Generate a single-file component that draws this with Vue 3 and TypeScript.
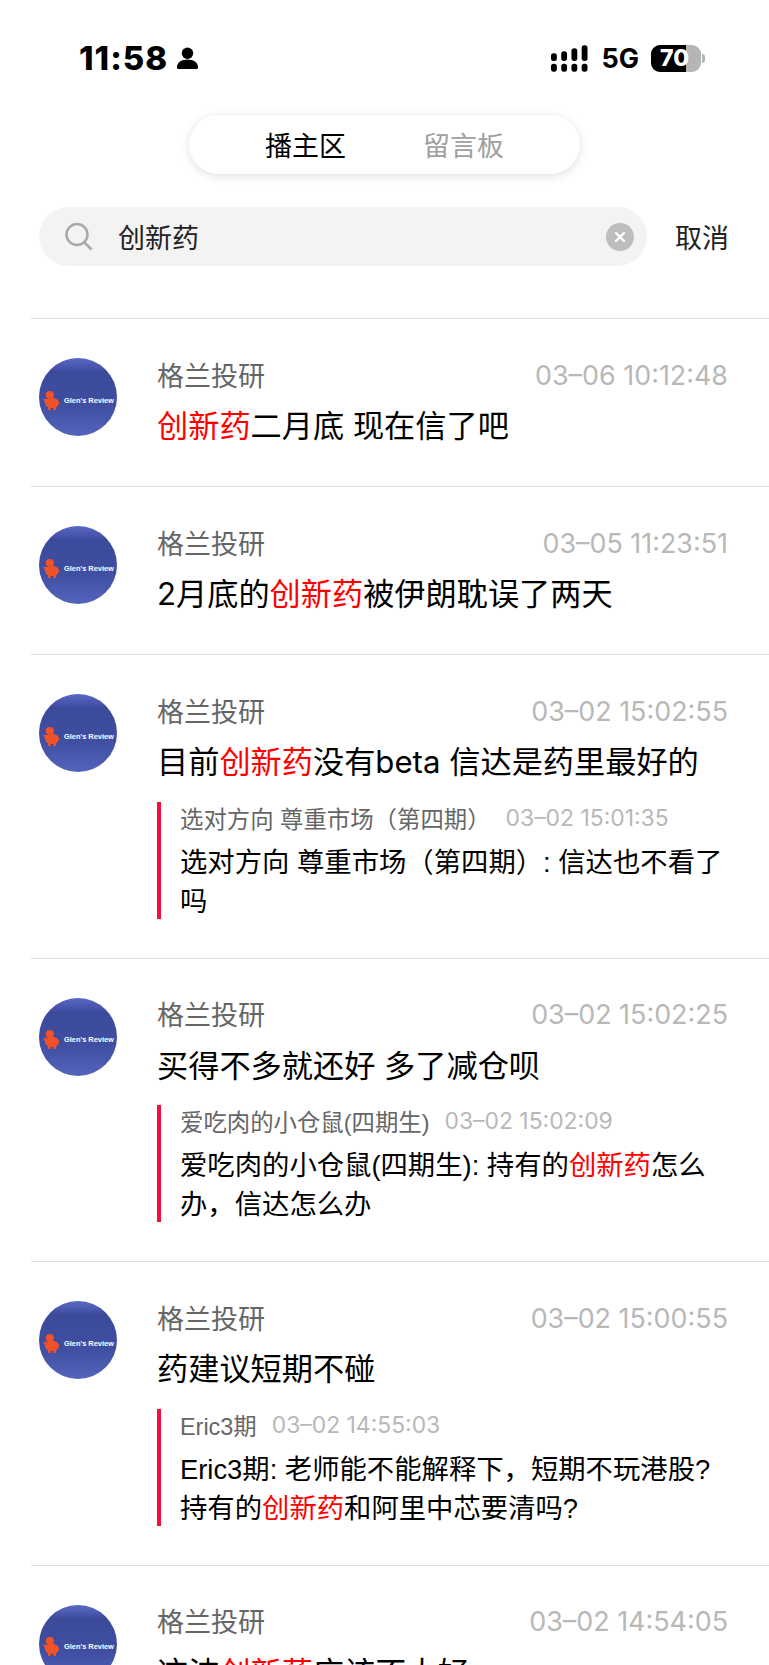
<template>
  <div class="page">
    <div class="status-bar">
      <div class="status-left">
        <span class="clock">11:58</span>
        <svg class="person" viewBox="0 0 24 24" width="23" height="24">
          <circle cx="12" cy="7" r="6" />
          <path d="M1 22c0-5.600 4.600-8.500 11-8.500s11 2.900 11 8.500c0 1-.5 1.500-1.300 1.500H2.300C1.500 23.500 1 23 1 22z" />
        </svg>
      </div>
      <div class="status-right">
        <svg class="signal" viewBox="0 0 38 27" width="37" height="27">
          <rect x="0" y="8" width="6" height="8" rx="2.600" />
          <rect x="0" y="19" width="6" height="8" rx="2.600" />
          <rect x="10.500" y="6" width="6" height="10" rx="2.800" />
          <rect x="10.500" y="19" width="6" height="8" rx="2.600" />
          <rect x="21" y="3" width="6" height="13" rx="2.800" />
          <rect x="21" y="19" width="6" height="8" rx="2.600" />
          <rect x="31.500" y="0" width="6" height="16" rx="2.800" />
          <rect x="31.500" y="19" width="6" height="8" rx="2.600" />
        </svg>
        <span class="network">5G</span>
        <div class="battery">
          <div class="battery-body">
            <div class="battery-level"></div>
            <span class="battery-text">70</span>
          </div>
          <div class="battery-tip"></div>
        </div>
      </div>
    </div>

    <div class="tabs-wrap">
      <div class="tabs">
        <span class="tab active">播主区</span>
        <span class="tab">留言板</span>
      </div>
    </div>

    <div class="search-row">
      <div class="search-box">
        <svg class="search-icon" viewBox="0 0 30 30" width="30" height="30" fill="none">
          <circle cx="13" cy="12.500" r="10.500" />
          <path d="M20.500 20.500 27.500 27.500" />
        </svg>
        <span class="search-text">创新药</span>
        <span class="clear-btn">
          <svg viewBox="0 0 12 12" width="12" height="12" fill="none">
            <path d="M2 2l8 8M10 2l-8 8" />
          </svg>
        </span>
      </div>
      <span class="cancel">取消</span>
    </div>

    <div class="list">
      <div v-for="(post, i) in posts" :key="i" class="post">
        <div class="avatar">
          <svg class="pig" viewBox="0 0 18 20" width="17" height="19">
            <circle cx="7.200" cy="4.300" r="4.300" />
            <ellipse cx="9.500" cy="12.500" rx="7.500" ry="5.500" />
            <path d="M0 7.500l4.500 1.500-2 4zM5 15.500h3.200V20H5.600zM11 15.500h3.200l-.6 4.500H11.400z" />
          </svg>
          <span class="avatar-text">Glen's Review</span>
        </div>
        <div class="post-main">
          <div class="post-head">
            <span class="post-name">格兰投研</span>
            <span class="post-time">{{ post.time }}</span>
          </div>
          <p class="post-body">
            <span v-for="(part, j) in split(post.text)" :key="j" :class="{ hit: part === keyword }">{{ part }}</span>
          </p>
          <div v-if="post.reply" class="reply">
            <div class="reply-head">
              <span class="reply-name">{{ post.reply.name }}</span>
              <span class="reply-time">{{ post.reply.time }}</span>
            </div>
            <p class="reply-body">
              <span v-for="(part, j) in split(post.reply.text)" :key="j" :class="{ hit: part === keyword }">{{ part }}</span>
            </p>
          </div>
        </div>
      </div>
    </div>
  </div>
</template>

<script setup lang="ts">
interface Reply {
  name: string
  time: string
  text: string
}

interface Post {
  time: string
  text: string
  reply?: Reply
}

const keyword = '创新药'

const posts: Post[] = [
  { time: '03–06 10:12:48', text: '创新药二月底 现在信了吧' },
  { time: '03–05 11:23:51', text: '2月底的创新药被伊朗耽误了两天' },
  {
    time: '03–02 15:02:55',
    text: '目前创新药没有beta 信达是药里最好的',
    reply: {
      name: '选对方向 尊重市场（第四期）',
      time: '03–02 15:01:35',
      text: '选对方向 尊重市场（第四期）: 信达也不看了吗',
    },
  },
  {
    time: '03–02 15:02:25',
    text: '买得不多就还好 多了减仓呗',
    reply: {
      name: '爱吃肉的小仓鼠(四期生)',
      time: '03–02 15:02:09',
      text: '爱吃肉的小仓鼠(四期生): 持有的创新药怎么办，信达怎么办',
    },
  },
  {
    time: '03–02 15:00:55',
    text: '药建议短期不碰',
    reply: {
      name: 'Eric3期',
      time: '03–02 14:55:03',
      text: 'Eric3期: 老师能不能解释下，短期不玩港股?持有的创新药和阿里中芯要清吗?',
    },
  },
  { time: '03–02 14:54:05', text: '这波创新药应该不太好' },
]

function split(text: string): string[] {
  return text.split(new RegExp(`(${keyword})`)).filter(Boolean)
}
</script>

<style>
html,
body {
  margin: 0;
  background: #fff;
  overflow: hidden;
}
</style>

<style scoped>
.page {
  height: 1665px;
  overflow: hidden;
  background: #fff;
  font-family: "Liberation Sans", "Noto Sans CJK SC", sans-serif;
  color: #000;
}

.status-bar {
  height: 115px;
  box-sizing: border-box;
  padding: 41px 64px 0 79px;
  display: flex;
  justify-content: space-between;
  align-items: flex-start;
}

.status-left,
.status-right {
  display: flex;
  align-items: center;
  height: 34px;
}

.clock {
  font-family: "Inter", sans-serif;
  font-size: 33px;
  font-weight: 800;
  letter-spacing: 1px;
  line-height: 34px;
}

.person {
  margin-left: 8px;
}

.network {
  margin-left: 13px;
  font-family: "Inter", sans-serif;
  font-size: 27px;
  font-weight: 700;
}

.battery {
  margin-left: 12px;
  display: flex;
  align-items: center;
}

.battery-body {
  position: relative;
  width: 50px;
  height: 27px;
  border-radius: 9px;
  overflow: hidden;
  background: #b5b5b5;
}

.battery-level {
  width: 35px;
  height: 100%;
  background: #000;
}

.battery-text {
  position: absolute;
  left: 9px;
  top: 0;
  font-family: "Inter", sans-serif;
  font-size: 23px;
  font-weight: 800;
  line-height: 27px;
  color: #fff;
}

.battery-tip {
  width: 3px;
  height: 9px;
  margin-left: 1px;
  border-radius: 0 3px 3px 0;
  background: #b5b5b5;
}

.tabs-wrap {
  display: flex;
  justify-content: center;
}

.tabs {
  width: 391px;
  height: 59px;
  display: flex;
  justify-content: center;
  align-items: center;
  gap: 77px;
  border-radius: 30px;
  background: #fff;
  box-shadow: 0 2px 10px rgba(0, 0, 0, 0.13);
}

.tab {
  font-size: 27px;
  color: #a0a0a0;
}

.tab.active {
  color: #000;
}

.search-row {
  margin-top: 33px;
  padding: 0 39px;
  display: flex;
  align-items: center;
}

.search-box {
  flex: none;
  width: 608px;
  height: 59px;
  box-sizing: border-box;
  padding: 0 13px 0 25px;
  display: flex;
  align-items: center;
  border-radius: 30px;
  background: #f3f3f3;
}

.search-icon {
  stroke: #a9a9a9;
  stroke-width: 2.500;
}

.search-text {
  margin-left: 24px;
  font-size: 27px;
  color: #222;
}

.clear-btn {
  margin-left: auto;
  width: 28px;
  height: 28px;
  border-radius: 50%;
  background: #bdbdbd;
  display: flex;
  align-items: center;
  justify-content: center;
}

.clear-btn path {
  stroke: #fff;
  stroke-width: 2.400;
  stroke-linecap: round;
}

.cancel {
  flex: none;
  margin-left: 28px;
  font-size: 27px;
  white-space: nowrap;
  color: #222;
}

.list {
  margin: 52px 0 0 31px;
}

.post {
  display: flex;
  padding: 39px 41px 39px 8px;
  border-top: 1px solid #dcdcdc;
}

.avatar {
  flex: none;
  width: 78px;
  height: 78px;
  box-sizing: border-box;
  padding: 6px 0 0 4px;
  overflow: hidden;
  border-radius: 50%;
  background: linear-gradient(180deg, #5a69c4 0%, #3c4a9c 18%, #3f4ea0 60%, #5464bc 100%);
  display: flex;
  align-items: center;
  gap: 4px;
}

.pig {
  fill: #f0522a;
  flex: none;
}

.avatar-text {
  font-size: 7.400px;
  font-weight: 700;
  white-space: nowrap;
  color: #fff;
}

.post-main {
  flex: 1;
  min-width: 0;
  margin-left: 40px;
}

.post-head {
  display: flex;
  justify-content: space-between;
  align-items: center;
  height: 32px;
}

.post-name {
  font-size: 27px;
  color: #666;
}

.post-time {
  padding-top: 1px;
  font-family: "Inter", sans-serif;
  font-size: 26.900px;
  color: #b8b8b8;
}

.post-body {
  margin: 15px 0 0;
  font-family: "Inter", "Noto Sans CJK SC", sans-serif;
  font-size: 31.200px;
  line-height: 42px;
  color: #000;
}

.hit {
  color: #f00;
}

.reply {
  display: flow-root;
  margin-top: 18.500px;
  padding-left: 19px;
  border-left: 4px solid #f5103c;
}

.reply-head {
  display: flex;
  align-items: center;
  gap: 15px;
  height: 32px;
}

.reply-name {
  font-size: 23.400px;
  color: #666;
}

.reply-time {
  font-family: "Inter", sans-serif;
  font-size: 22.900px;
  color: #b8b8b8;
}

.reply-body {
  margin: 9px 0 -2px;
  font-size: 27.350px;
  line-height: 39px;
  color: #000;
}
</style>
